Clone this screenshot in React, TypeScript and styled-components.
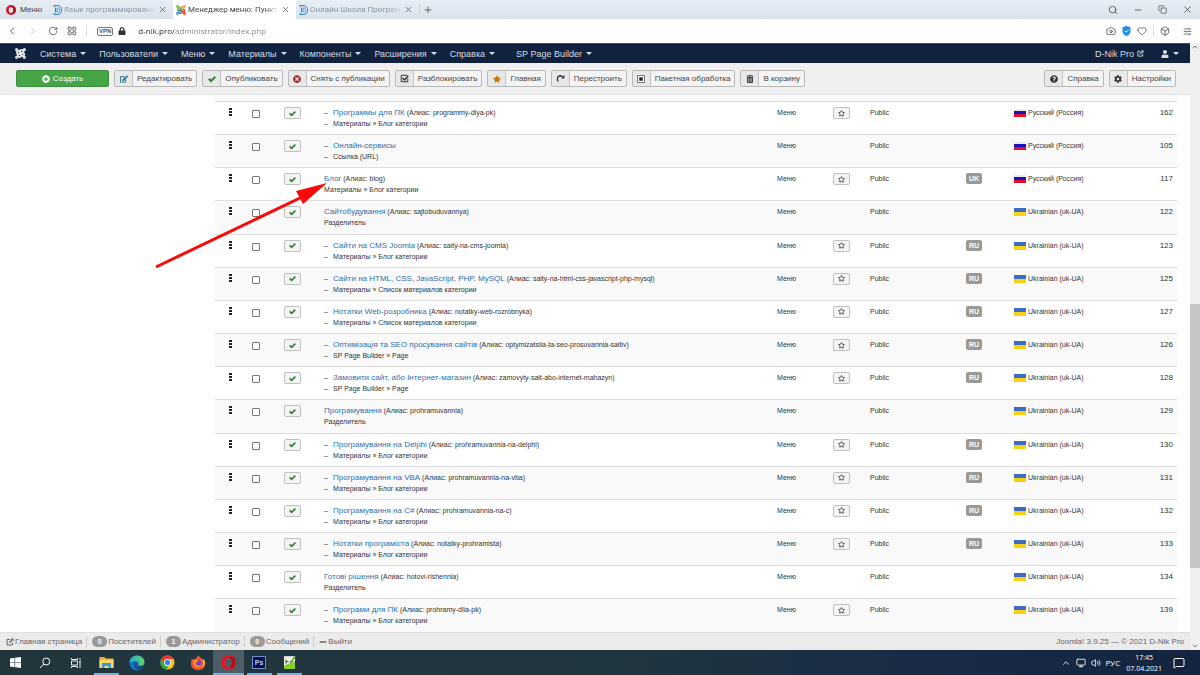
import React from "react";
import styled, { createGlobalStyle } from "styled-components";
import {
  FaEdit, FaTimesCircle, FaStar, FaTrashAlt, FaQuestionCircle,
  FaCog, FaPlusCircle, FaUser, FaLock, FaMinus,
} from "react-icons/fa";
import {
  Search, X, Plus, ChevronLeft, ChevronRight, ChevronUp, ChevronDown, RotateCw, LayoutGrid, Camera, Heart, Box, Copy,
  SlidersHorizontal, Star, MessageSquare, Volume2, Monitor, Minus,
} from "lucide-react";

const Global = createGlobalStyle`
  * { box-sizing: border-box; }
  body { margin: 0; background: #fff; font-family: "Liberation Sans", Arial, sans-serif; font-size: 7px; line-height: 12px; color: #333; }
  button { font: inherit; color: inherit; border: 0; padding: 0; background: none; cursor: pointer; }
  a { text-decoration: none; color: inherit; }
  svg { display: block; flex: none; }
`;

const Screen = styled.div`
  display: flex;
  flex-direction: column;
  min-height: 100vh;
`;

/* Browser window */
const TabStrip = styled.header`
  display: flex;
  align-items: stretch;
  height: 19px;
  background: linear-gradient(#e8eef5, #d9e2eb);
  font-family: Roboto, "Noto Sans", sans-serif;
`;
const MenuButton = styled.button`
  display: flex;
  align-items: center;
  gap: 4px;
  width: 50px;
  padding-left: 6px;
  color: #444;
  font-size: 8px;
`;
const Tab = styled.div<{ $active?: boolean }>`
  display: flex;
  align-items: center;
  gap: 2px;
  width: 123px;
  padding: 0 6px 0 3px;
  background: ${(p) => (p.$active ? "#fff" : "transparent")};
  color: ${(p) => (p.$active ? "#444" : "#8796a8")};
  font-size: 8px;
`;
const TabTitle = styled.span`
  flex: 1;
  min-width: 0;
  overflow: hidden;
  white-space: nowrap;
  mask-image: linear-gradient(to right, #000 85%, transparent);
`;
const IconButton = styled.button`
  display: flex;
  align-items: center;
  justify-content: center;
  color: #555;
`;
const NewTab = styled(IconButton)`
  width: 16px;
  border-left: 1px solid #c9d2dc;
  height: 11px;
  align-self: center;
`;
const WindowControls = styled.div`
  display: flex;
  align-items: center;
  gap: 15px;
  margin-left: auto;
  padding-right: 7px;
`;
const AddressBar = styled.div`
  display: flex;
  align-items: center;
  height: 24px;
  padding: 0 8px 0 6px;
  background: #fff;
`;
const Navigation = styled.div`
  display: flex;
  align-items: center;
  gap: 9px;
  width: 91px;
`;
const Vpn = styled.span`
  padding: 0 1px;
  border: 1px solid #777;
  border-radius: 2px;
  font-size: 6px;
  line-height: 7px;
  font-weight: bold;
  color: #555;
  margin-right: 5px;
`;
const Url = styled.input`
  flex: 1;
  min-width: 0;
  margin-left: 12px;
  padding: 0;
  border: 0;
  outline: 0;
  font: 8px/16px "Open Sans", "Noto Sans", sans-serif;
  color: transparent;
  background: linear-gradient(to right, #222 36px, #7d828a 36px);
  background-clip: text;
`;
const Extensions = styled.div`
  display: flex;
  align-items: center;
  gap: 6px;
`;
const Divider = styled.span<{ $blank?: boolean }>`
  width: 1px;
  height: 11px;
  background: ${(p) => (p.$blank ? "transparent" : "#dcdfe4")};
`;

/* Web page */
const Viewport = styled.div`
  display: flex;
  flex: 1;
`;
const Page = styled.div`
  display: flex;
  flex-direction: column;
  flex: 1;
  min-width: 0;
`;
const Scrollbar = styled.div`
  display: flex;
  flex-direction: column;
  align-items: center;
  justify-content: space-between;
  width: 10px;
  background: #f0f0f0;
  color: #444;
`;
const ScrollTrack = styled.div`
  display: flex;
  flex-direction: column;
  justify-content: flex-end;
  flex: 1;
  width: 100%;
  padding: 0 0 74px;
`;
const ScrollThumb = styled.div`
  height: 51%;
  background: #c6c6c6;
`;
const AdminNav = styled.nav`
  display: flex;
  align-items: center;
  height: 20px;
  padding: 0 12px 0 15px;
  background: #10223e;
  border-top: 1px solid #3b5566;
  color: #d9dde3;
  font-size: 9px;
`;
const NavItem = styled.button<{ $lead?: number }>`
  display: flex;
  align-items: center;
  gap: 5px;
  margin-left: ${(p) => p.$lead ?? 14}px;
  white-space: nowrap;
  &::after {
    content: "";
    border: 3px solid transparent;
    border-top-color: currentColor;
    border-bottom: 0;
    margin: 0 -1px;
  }
`;
const SiteLink = styled.a`
  display: flex;
  align-items: center;
  gap: 3px;
  margin-left: auto;
`;
const Toolbar = styled.div`
  display: flex;
  align-items: center;
  gap: 5px;
  height: 32px;
  padding: 0 14px 0 16px;
  background: #f0f0f0;
  border-bottom: 1px solid #e2e2e2;
  color: #444;
  font-size: 8px;
`;
const CreateButton = styled.button`
  display: flex;
  align-items: center;
  justify-content: center;
  gap: 3px;
  width: 93px;
  height: 17px;
  border: 1px solid #3c8f3c;
  border-radius: 2px;
  background: #46a546;
  color: #fff;
`;
const ToolButton = styled.button<{ $push?: boolean }>`
  display: flex;
  align-items: stretch;
  height: 17px;
  margin-left: ${(p) => (p.$push ? "auto" : "0")};
  border: 1px solid #b8b8b8;
  border-radius: 2px;
  background: #f4f4f4;
  overflow: hidden;
  white-space: nowrap;
`;
const ToolIcon = styled.span<{ $color: string }>`
  display: flex;
  align-items: center;
  justify-content: center;
  width: 18px;
  background: #e8e8e8;
  border-right: 1px solid #c4c4c4;
  color: ${(p) => p.$color};
`;
const ToolLabel = styled.span`
  padding: 0 4px;
  line-height: 15px;
`;
const Content = styled.main`
  position: relative;
  display: flex;
  flex: 1;
  padding: 0 13px 0 215px;
`;
const ListArea = styled.div`
  display: flex;
  flex: 1;
  padding-top: 6px;
  background: #f9f9f9;
`;
const List = styled.table`
  width: 100%;
  table-layout: fixed;
  border-collapse: collapse;
  background: #fff;
`;
const Row = styled.tr`
  height: 33px;
  &:nth-child(even) { background: #f9f9f9; }
`;
const Cell = styled.td<{ $align?: string }>`
  padding: 5px 4px 0 8px;
  border-top: 1px solid #dedede;
  vertical-align: top;
  white-space: nowrap;
  text-align: ${(p) => p.$align ?? "left"};
`;
const IdCell = styled(Cell)`
  font-size: 8px;
`;
const Handle = styled.span`
  display: flex;
  flex-direction: column;
  gap: 1px;
  width: 3px;
  margin: 1px 0 0 6px;
  i { height: 2px; background: #222; }
`;
const Check = styled.input`
  appearance: none;
  display: block;
  width: 8px;
  height: 8px;
  margin: 3px 0 0;
  border: 1px solid #777;
  border-radius: 1px;
  background: #fff;
`;
const SmallButton = styled.button<{ $color: string }>`
  display: flex;
  align-items: center;
  justify-content: center;
  width: 17px;
  height: 12px;
  border: 1px solid #c0c0c0;
  border-radius: 2px;
  background: #f4f4f4;
  color: ${(p) => p.$color};
`;
const Entry = styled.div<{ $child: boolean }>`
  padding-left: ${(p) => (p.$child ? 9 : 0)}px;
  line-height: 11px;
  & > div::before {
    content: "${(p) => (p.$child ? "–" : "")}";
    float: left;
    margin-left: -9px;
  }
`;
const TitleLink = styled.a`
  font-size: 8px;
  color: #3071a9;
`;
const Badge = styled.a`
  display: inline-block;
  padding: 0 3px;
  border-radius: 2px;
  background: #999;
  color: #fff;
  font-weight: bold;
  line-height: 11px;
`;
const Language = styled.span`
  display: flex;
  align-items: center;
  gap: 2px;
`;
const Flag = styled.i<{ $ua: boolean }>`
  width: 12px;
  height: 8px;
  background: ${(p) =>
    p.$ua
      ? "linear-gradient(#3d6cc4 50%, #f8d010 50%)"
      : "linear-gradient(#e8e8f0 2px, #1c12c0 2px 5px, #e01228 5px)"};
`;
const Pointer = styled.svg`
  position: absolute;
  left: 150px;
  top: 82px;
  pointer-events: none;
`;
const StatusBar = styled.footer`
  display: flex;
  align-items: center;
  height: 18px;
  padding: 0 6px;
  background: #ebebeb;
  border-top: 1px solid #e0e0e0;
  color: #666;
  font-size: 8px;
`;
const StatusItem = styled.a`
  display: flex;
  align-items: center;
  gap: 1px;
  padding-right: 4px;
  margin-right: 5px;
  line-height: 10px;
  &:not(:nth-last-child(2)) { border-right: 1px solid #ccc; }
`;
const Count = styled.b`
  width: 15px;
  border-radius: 6px;
  background: #999;
  color: #fff;
  font-size: 7px;
  line-height: 11px;
  text-align: center;
`;
const Copyright = styled.span`
  margin-left: auto;
`;

/* Desktop taskbar */
const Taskbar = styled.footer`
  display: flex;
  align-items: stretch;
  height: 25px;
  background: linear-gradient(to right, #22353d, #20363f 50%, #182a45 80%, #14243f);
  color: #fff;
  font-family: "Open Sans", "Noto Sans", sans-serif;
`;
const TaskGroup = styled.div<{ $width: number }>`
  display: flex;
  width: ${(p) => p.$width}px;
`;
const Task = styled.button<{ $open?: boolean; $active?: boolean }>`
  display: flex;
  align-items: center;
  justify-content: center;
  flex: 1;
  background-color: ${(p) => (p.$active ? "#4d5d66" : "transparent")};
  background-image: ${(p) => (p.$open ? "linear-gradient(#6fb0e6, #6fb0e6)" : "none")};
  background-repeat: no-repeat;
  background-position: center bottom;
  background-size: ${(p) => (p.$active ? "100%" : "25px")} 2px;
`;
const Tray = styled.div`
  display: flex;
  align-items: center;
  gap: 5px;
  margin-left: auto;
  padding-right: 15px;
  font-size: 8px;
`;
const Clock = styled.time`
  margin: 0 6px 0 1px;
  text-align: center;
  font-size: 7px;
  line-height: 11px;
`;

const Tick = ({ size }: { size: number }) => (
  <svg width={size} height={size} viewBox="0 0 16 16">
    <path d="M1.500 7.500L6 12l8.500-8.500" fill="none" stroke="currentColor" strokeWidth="4" />
  </svg>
);
const TickBox = () => (
  <svg width="9" height="9" viewBox="0 0 18 18" fill="none" stroke="#333">
    <path d="M15.500 9v6.500h-13v-13h12" strokeWidth="2" /><path d="M5 8l4 4 7.500-8.500" strokeWidth="3" />
  </svg>
);
const RebuildIcon = () => (
  <svg width="9" height="9" viewBox="0 0 18 18">
    <path d="M4.500 15C1 10 3 4 8 3.500c2 0 3.500.500 5 2" fill="none" stroke="#333" strokeWidth="2.600" />
    <path d="M17 2v7h-7z" fill="#333" />
  </svg>
);
const OutIcon = ({ size }: { size: number }) => (
  <svg width={size} height={size} viewBox="0 0 16 16" fill="none" stroke="currentColor" strokeWidth="2">
    <path d="M8 3H2v11h11V9" /><path d="M6.500 9.500L13 3" strokeWidth="2.600" /><path d="M9 1h6v6z" fill="currentColor" stroke="none" />
  </svg>
);
const OperaLogo = ({ size }: { size: number }) => (
  <svg width={size} height={size} viewBox="0 0 20 20">
    <path fillRule="evenodd" fill="#e0172a" d="M10 0a10 10 0 1 0 0 20 10 10 0 0 0 0-20zM10 4c2.800 0 4.600 2.600 4.600 6s-1.800 6-4.600 6-4.600-2.600-4.600-6S7.200 4 10 4z" />
    <path fill="#a70014" d="M10 4c2.800 0 4.600 2.600 4.600 6s-1.800 6-4.600 6c2 1.800 5 1.600 7 .4A10 10 0 0 0 17 3c-2-1.200-5-.8-7 1z" opacity=".6" />
  </svg>
);
const SiteLogo = () => (
  <svg width="9" height="10" viewBox="0 0 18 20" fill="none" stroke="#2b7fae" strokeWidth="2">
    <path d="M2 1h6c6 0 9 4 9 9s-3 9-9 9H2M5 5v10M2 1v3M2 16v3" />
    <path d="M8 6h2c2 0 3 2 3 4s-1 4-3 4H8z" stroke="#4f9fd0" />
  </svg>
);
const JoomlaMark = ({ size, colors }: { size: number; colors: string[] }) => (
  <svg width={size} height={size} viewBox="0 0 20 20" fill="none" strokeWidth="3.400" strokeLinecap="round">
    <path d="M4 10.500L3.800 8c-.5-2 1.500-4 3.500-2.500L12 10" stroke={colors[0]} />
    <path d="M9 4.500L11 3.800c3-1 5 1 4 3.500L10 12" stroke={colors[1]} />
    <path d="M16 9.500c1.500 2 .5 5-2.500 5L8 10" stroke={colors[2]} />
    <path d="M10.500 15.500c-3 2-6 0-5.500-3L10 8" stroke={colors[3]} />
    <circle cx="3" cy="3" r="1.200" stroke={colors[0]} /><circle cx="17" cy="3" r="1.200" stroke={colors[1]} />
    <circle cx="17" cy="17" r="1.200" stroke={colors[2]} /><circle cx="3" cy="17" r="1.200" stroke={colors[3]} />
  </svg>
);
const Shield = () => (
  <svg width="9" height="10" viewBox="0 0 18 20">
    <path d="M9 0l8 2.500V10c0 5-3 8-8 10-5-2-8-5-8-10V2.500z" fill="#1b8df0" />
    <path d="M5.500 9.500l2.800 3 4.700-5" fill="none" stroke="#fff" strokeWidth="2" />
  </svg>
);
const BatchIcon = () => (
  <svg width="8" height="8" viewBox="0 0 16 16">
    <path d="M1 1h14v14H1z" fill="#fff" stroke="#555" strokeWidth="1.600" />
    <path d="M4.500 4.500h7v7h-7z" fill="#222" />
  </svg>
);
const WindowsLogo = () => (
  <svg width="11" height="11" viewBox="0 0 22 22" fill="#fff">
    <path d="M0 3l9-1.300V10.400H0zM10.200 1.500L22 0v10.400H10.200zM0 11.600h9v8.700L0 19zM10.200 11.600H22V22l-11.800-1.600z" />
  </svg>
);
const MirroredSearch = () => (
  <svg width="12" height="12" viewBox="0 0 24 24" fill="none" stroke="#fff" strokeWidth="2">
    <circle cx="14.500" cy="9" r="7" /><path d="M9.500 14L2 22" />
  </svg>
);
const TaskView = () => (
  <svg width="12" height="12" viewBox="0 0 24 24" fill="none" stroke="#fff" strokeWidth="1.800">
    <path d="M3 8h12v8H3zM3 2v3h12V2M3 22v-3h12v3M20 2v4M20 10v12" /><path d="M18.500 7.500h3v3h-3z" fill="#fff" stroke="none" />
  </svg>
);
const Explorer = () => (
  <svg width="15" height="13" viewBox="0 0 30 26">
    <path d="M1 2h10l3 3h15v19H1z" fill="#e8a92c" /><path d="M1 7h28v17H1z" fill="#fbd766" />
    <path d="M6 14h18v10h-5v-4h-8v4H6z" fill="#3f95d8" />
  </svg>
);
const Edge = () => (
  <svg width="16" height="16" viewBox="0 0 32 32">
    <defs><linearGradient id="edge" x1="0" x2="1"><stop offset="0" stopColor="#2aa8e0" /><stop offset="1" stopColor="#5fd35a" /></linearGradient></defs>
    <circle cx="16" cy="16" r="15" fill="#1671c4" />
    <path d="M1 16C1 7 8 1 16 1c9 0 15 6 15 13 0 5-4 7-8 7-3 0-5-1-4-3 1-3-1-6-5-6-6 0-12 2-13 4z" fill="url(#edge)" />
    <path d="M12 13c-5 6-1 15 8 17 4-1 7-3 9-6-8 4-17 0-16-8 0-2 1-3 2-4z" fill="#0c4f9a" />
    <path d="M16 15c-1 5 2 8 7 8 3 0 5-1 7-2l1 4c-5 1-11 1-15-3-2-3-2-5 0-7z" fill="#22363e" />
  </svg>
);
const Chrome = () => (
  <svg width="15" height="15" viewBox="0 0 30 30">
    <circle cx="15" cy="15" r="14" fill="#fbc116" />
    <path d="M3 8a14 14 0 0 1 24.500 0H15a7 7 0 0 0-6 10.500z" fill="#e33b2e" />
    <path d="M3 8l6 10.500A7 7 0 0 0 17 22l-4 7A14 14 0 0 1 3 8z" fill="#2da94f" />
    <circle cx="15" cy="15" r="6.800" fill="#fff" /><circle cx="15" cy="15" r="5.300" fill="#3f7de8" />
  </svg>
);
const Firefox = () => (
  <svg width="16" height="16" viewBox="0 0 32 32">
    <path d="M4 7l3 3c2-2 4-3 6-3 0-3 2-5 4-6 1 4 5 5 8 9l1-2c3 4 5 8 4 12-1 6-7 10-14 10C8 30 2 25 2 18c0-4 1-8 2-11z" fill="#f5542e" />
    <path d="M17 1c1 4 5 5 8 9 3 5 2 12-3 15 5-1 8-5 8-10 0-3-2-6-4-7l-1 2c-2-4-6-5-8-9z" fill="#ffc928" />
    <path d="M7 10c5-1 6 1 10 2-2 2-4 1-5 4 3 4 7 3 10 0 2 6-3 9-8 8-5-1-9-7-7-14z" fill="#ff9a24" />
    <circle cx="17" cy="16" r="5.500" fill="#7c3fc4" />
    <path d="M8 10c4-1 6 1 9 2-2 2-4 1-4 4l-5 1z" fill="#ff8b22" />
  </svg>
);
const Photoshop = () => (
  <svg width="14" height="13" viewBox="0 0 28 26">
    <path d="M1 1h26v24H1z" fill="#07124a" stroke="#8ea8f0" strokeWidth="1.600" />
    <text x="14" y="18" textAnchor="middle" fontFamily="Liberation Sans" fontWeight="bold" fontSize="14" fill="#b5c6ff">Ps</text>
  </svg>
);
const Notepad = () => (
  <svg width="14" height="15" viewBox="0 0 28 30">
    <path d="M2 2h22v26H2z" fill="#f4f8e8" /><path d="M2 21l22-9v16H2z" fill="#86cc2c" /><path d="M2 2h22v3H2z" fill="#cfd4cc" />
    <path d="M6 9v9M6 13h5M14 13h5" stroke="#445" strokeWidth="2" /><path d="M26 3l-9 12-3 2 1-4 8-11z" fill="#5c9a34" />
  </svg>
);

const tools: [string, React.ReactNode, string][] = [
  ["Редактировать", <FaEdit size={8} />, "#24718e"],
  ["Опубликовать", <Tick size={8} />, "#378137"],
  ["Снять с публикации", <FaTimesCircle size={8} />, "#a5221c"],
  ["Разблокировать", <TickBox />, "#333"],
  ["Главная", <FaStar size={8} />, "#c67605"],
  ["Перестроить", <RebuildIcon />, "#333"],
  ["Пакетная обработка", <BatchIcon />, "#333"],
  ["В корзину", <FaTrashAlt size={8} />, "#444"],
];

const BLOG = "Материалы » Блог категории";
const LISTING = "Материалы » Список материалов категории";
const BUILDER = "SP Page Builder » Page";
const SEPARATOR = "Разделитель";

type Item = { id: number; title: string; alias?: string; type: string; child?: boolean; link?: string; ru?: boolean };
const items: Item[] = [
  { id: 162, title: "Программы для ПК", alias: "programmy-dlya-pk", type: BLOG, child: true, ru: true },
  { id: 105, title: "Онлайн-сервисы", type: "Ссылка (URL)", child: true, ru: true },
  { id: 117, title: "Блог", alias: "blog", type: BLOG, link: "UK", ru: true },
  { id: 122, title: "Сайтобудування", alias: "sajtobuduvannya", type: SEPARATOR },
  { id: 123, title: "Сайти на CMS Joomla", alias: "saity-na-cms-joomla", type: BLOG, child: true, link: "RU" },
  { id: 125, title: "Сайти на HTML, CSS, JavaScript, PHP, MySQL", alias: "saity-na-html-css-javascript-php-mysql", type: LISTING, child: true, link: "RU" },
  { id: 127, title: "Нотатки Web-розробника", alias: "notatky-web-rozrobnyka", type: LISTING, child: true, link: "RU" },
  { id: 126, title: "Оптимізація та SEO просування сайтів", alias: "optymizatsiia-ta-seo-prosuvannia-saitiv", type: BUILDER, child: true, link: "RU" },
  { id: 128, title: "Замовити сайт, або Інтернет-магазин", alias: "zamovyty-sait-abo-internet-mahazyn", type: BUILDER, child: true, link: "RU" },
  { id: 129, title: "Програмування", alias: "prohramuvannia", type: SEPARATOR },
  { id: 130, title: "Програмування на Delphi", alias: "prohramuvannia-na-delphi", type: BLOG, child: true, link: "RU" },
  { id: 131, title: "Програмування на VBA", alias: "prohramuvannia-na-vba", type: BLOG, child: true, link: "RU" },
  { id: 132, title: "Програмування на C#", alias: "prohramuvannia-na-c", type: BLOG, child: true, link: "RU" },
  { id: 133, title: "Нотатки програміста", alias: "notatky-prohramista", type: BLOG, child: true, link: "RU" },
  { id: 134, title: "Готові рішення", alias: "hotovi-rishennia", type: SEPARATOR },
  { id: 139, title: "Програми для ПК", alias: "prohramy-dlia-pk", type: BLOG, child: true },
];
const columns = [29, 32, 40, 0, 56, 37, 96, 48, 119, 52];

const BrowserTab = ({ title, icon, active }: { title: string; icon: React.ReactNode; active?: boolean }) => (
  <Tab $active={active}>
    {icon}
    <TabTitle>{title}</TabTitle>
    <IconButton aria-label="Закрыть вкладку"><X size={9} /></IconButton>
  </Tab>
);

const ItemRow = ({ item }: { item: Item }) => (
  <Row>
    <Cell><Handle><i /><i /><i /></Handle></Cell>
    <Cell><Check type="checkbox" aria-label={item.title} /></Cell>
    <Cell><SmallButton $color="#378137" aria-label="Опубликовано"><Tick size={7} /></SmallButton></Cell>
    <Cell>
      <Entry $child={!!item.child}>
        <div><TitleLink href="#">{item.title}</TitleLink>{item.alias && ` (Алиас: ${item.alias})`}</div>
        <div>{item.type}</div>
      </Entry>
    </Cell>
    <Cell>Меню</Cell>
    <Cell>
      {item.type !== SEPARATOR && item.alias && (
        <SmallButton $color="#444" aria-label="По умолчанию"><Star size={7} strokeWidth={3} /></SmallButton>
      )}
    </Cell>
    <Cell>Public</Cell>
    <Cell>{item.link && <Badge href="#">{item.link}</Badge>}</Cell>
    <Cell><Language><Flag $ua={!item.ru} />{item.ru ? "Русский (Россия)" : "Ukrainian (uk-UA)"}</Language></Cell>
    <IdCell $align="right">{item.id}</IdCell>
  </Row>
);

export default function App() {
  return (
    <Screen>
      <Global />
      <TabStrip>
        <MenuButton><OperaLogo size={10} />Меню</MenuButton>
        <BrowserTab title="Язык программировани" icon={<SiteLogo />} />
        <BrowserTab
          title="Менеджер меню: Пункт"
          icon={<JoomlaMark size={10} colors={["#7ac143", "#f9a541", "#f44321", "#5091cd"]} />}
          active
        />
        <BrowserTab title="Онлайн Школа Програм" icon={<SiteLogo />} />
        <NewTab aria-label="Новая вкладка"><Plus size={10} /></NewTab>
        <WindowControls>
          <IconButton aria-label="Поиск"><Search size={10} /></IconButton>
          <IconButton aria-label="Свернуть"><Minus size={10} /></IconButton>
          <IconButton aria-label="Восстановить"><Copy size={9} /></IconButton>
          <IconButton aria-label="Закрыть"><X size={11} /></IconButton>
        </WindowControls>
      </TabStrip>
      <AddressBar>
        <Navigation>
          <IconButton aria-label="Назад"><ChevronLeft size={12} /></IconButton>
          <IconButton aria-label="Вперёд"><ChevronRight size={12} color="#c4c8cc" /></IconButton>
          <IconButton aria-label="Обновить"><RotateCw size={10} /></IconButton>
          <IconButton aria-label="Экспресс-панель"><LayoutGrid size={10} /></IconButton>
          <Divider />
        </Navigation>
        <Vpn>VPN</Vpn>
        <FaLock size={8} color="#333" />
        <Url aria-label="Адрес" defaultValue="d-nik.pro/administrator/index.php" />
        <Extensions>
          <IconButton aria-label="Снимок"><Camera size={10} /></IconButton>
          <IconButton aria-label="Защита"><Shield /></IconButton>
          <IconButton aria-label="Закладки"><Heart size={10} /></IconButton>
          <Divider />
          <IconButton aria-label="Расширения"><Box size={10} /></IconButton>
          <Divider $blank />
          <IconButton aria-label="Настройка"><SlidersHorizontal size={9} /></IconButton>
        </Extensions>
      </AddressBar>

      <Viewport>
        <Page>
          <AdminNav>
            <JoomlaMark size={11} colors={["#e4e7ec", "#e4e7ec", "#e4e7ec", "#e4e7ec"]} />
            {["Система", "Пользователи", "Меню", "Материалы", "Компоненты", "Расширения", "Справка"].map((label) => (
              <NavItem key={label}>{label}</NavItem>
            ))}
            <NavItem $lead={22}>SP Page Builder</NavItem>
            <SiteLink href="#">D-Nik Pro<OutIcon size={7} /></SiteLink>
            <NavItem $lead={17} aria-label="Пользователь"><FaUser size={8} /></NavItem>
          </AdminNav>
          <Toolbar>
            <CreateButton><FaPlusCircle size={8} />Создать</CreateButton>
            {tools.map(([label, icon, color]) => (
              <ToolButton key={label}><ToolIcon $color={color}>{icon}</ToolIcon><ToolLabel>{label}</ToolLabel></ToolButton>
            ))}
            <ToolButton $push><ToolIcon $color="#333"><FaQuestionCircle size={8} /></ToolIcon><ToolLabel>Справка</ToolLabel></ToolButton>
            <ToolButton><ToolIcon $color="#333"><FaCog size={8} /></ToolIcon><ToolLabel>Настройки</ToolLabel></ToolButton>
          </Toolbar>
          <Content>
            <ListArea>
              <List>
                <colgroup>
                  {columns.map((width, i) => <col key={i} style={width ? { width } : undefined} />)}
                </colgroup>
                <tbody>{items.map((item) => <ItemRow key={item.id} item={item} />)}</tbody>
              </List>
            </ListArea>
            <Pointer width="180" height="100" viewBox="0 0 180 100">
              <path d="M6 90L152 20" stroke="#fb0808" strokeWidth="3" />
              <path d="M177 6L146 14L153 27Z" fill="#fb0808" />
            </Pointer>
          </Content>
          <StatusBar>
            <StatusItem href="#"><OutIcon size={8} />Главная страница</StatusItem>
            <StatusItem href="#"><Count>0</Count>Посетителей</StatusItem>
            <StatusItem href="#"><Count>1</Count>Администратор</StatusItem>
            <StatusItem href="#"><Count>0</Count>Сообщений</StatusItem>
            <StatusItem href="#"><FaMinus size={8} />Выйти</StatusItem>
            <Copyright>Joomla! 3.9.25 — © 2021 D-Nik Pro</Copyright>
          </StatusBar>
        </Page>
        <Scrollbar>
          <ChevronUp size={8} />
          <ScrollTrack><ScrollThumb /></ScrollTrack>
          <ChevronDown size={8} />
        </Scrollbar>
      </Viewport>

      <Taskbar>
        <TaskGroup $width={91}>
          <Task aria-label="Пуск"><WindowsLogo /></Task>
          <Task aria-label="Поиск"><MirroredSearch /></Task>
          <Task aria-label="Представление задач"><TaskView /></Task>
        </TaskGroup>
        <TaskGroup $width={214}>
          <Task $open aria-label="Проводник"><Explorer /></Task>
          <Task aria-label="Edge"><Edge /></Task>
          <Task aria-label="Chrome"><Chrome /></Task>
          <Task aria-label="Firefox"><Firefox /></Task>
          <Task $open $active aria-label="Opera"><OperaLogo size={15} /></Task>
          <Task $open aria-label="Photoshop"><Photoshop /></Task>
          <Task $open aria-label="Notepad++"><Notepad /></Task>
        </TaskGroup>
        <Tray>
          <ChevronUp size={10} /><Monitor size={10} /><Volume2 size={10} />
          <span>РУС</span>
          <Clock>17:45<br />07.04.2021</Clock>
          <MessageSquare size={12} />
        </Tray>
      </Taskbar>
    </Screen>
  );
}
